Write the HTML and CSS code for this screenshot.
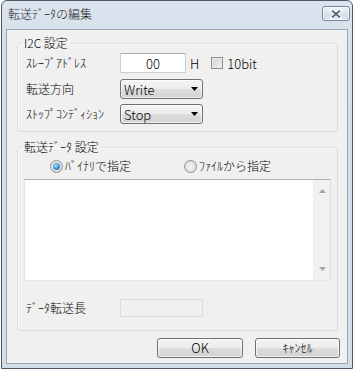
FILE: index.html
```html
<!DOCTYPE html>
<html lang="ja">
<head>
<meta charset="utf-8">
<title>転送ﾃﾞｰﾀの編集</title>
<link rel="stylesheet" href="styles.css">
</head>
<body>
<div class="window">
  <div class="titlebar">
    <span class="title">転送ﾃﾞｰﾀの編集</span>
    <span class="close">
      <svg width="27" height="14" viewBox="0 0 27 14">
        <path d="M9.5 3.5 L17.5 10.5 M17.5 3.5 L9.5 10.5" stroke="#f4f7fa" stroke-width="4" stroke-linecap="square" fill="none"/>
        <path d="M9.5 3.5 L17.5 10.5 M17.5 3.5 L9.5 10.5" stroke="#55606e" stroke-width="2" fill="none"/>
      </svg>
    </span>
  </div>
  <div class="client">
    <fieldset class="group g1">
      <legend>I2C 設定</legend>
      <div class="gbody g1body">
        <div class="row">
          <span class="lbl">ｽﾚｰﾌﾞｱﾄﾞﾚｽ</span>
          <span class="textbox addr">00</span>
          <span class="unit">H</span>
          <span class="check"></span>
          <span class="chklbl">10bit</span>
        </div>
        <div class="row r2">
          <span class="lbl">転送方向</span>
          <span class="combo">Write<svg class="arrow" width="7" height="4" viewBox="0 0 7 4"><path d="M0 0H7L3.5 4Z" fill="#000"/></svg></span>
        </div>
        <div class="row r3">
          <span class="lbl">ｽﾄｯﾌﾟｺﾝﾃﾞｨｼｮﾝ</span>
          <span class="combo">Stop<svg class="arrow" width="7" height="4" viewBox="0 0 7 4"><path d="M0 0H7L3.5 4Z" fill="#000"/></svg></span>
        </div>
      </div>
    </fieldset>
    <fieldset class="group g2">
      <legend>転送ﾃﾞｰﾀ 設定</legend>
      <div class="gbody g2body">
        <div class="radios">
          <span class="opt first"><span class="radio on"></span><span class="rlbl">ﾊﾞｲﾅﾘで指定</span></span>
          <span class="opt"><span class="radio"></span><span class="rlbl">ﾌｧｲﾙから指定</span></span>
        </div>
        <div class="memo">
          <div class="memo-text"></div>
          <div class="vscroll">
            <svg width="7" height="4" viewBox="0 0 7 4"><path d="M0 4H7L3.5 0Z" fill="#a3a3a3"/></svg>
            <svg width="7" height="4" viewBox="0 0 7 4"><path d="M0 0H7L3.5 4Z" fill="#a3a3a3"/></svg>
          </div>
        </div>
        <div class="row r4">
          <span class="lbl">ﾃﾞｰﾀ転送長</span>
          <span class="textbox disabled"></span>
        </div>
      </div>
    </fieldset>
    <div class="buttons">
      <span class="btn ok">OK</span>
      <span class="btn cancel">ｷｬﾝｾﾙ</span>
    </div>
  </div>
</div>
</body>
</html>
```
FILE: styles.css
```css
* { box-sizing: border-box; }
html, body { margin: 0; padding: 0; background: #ffffff; }
body {
  font-family: "Noto Sans CJK JP", "Liberation Sans", sans-serif;
  font-size: 12px;
  font-weight: 300;
  color: #000;
}
.window {
  margin-left: 1px;
  width: 352px;
  height: 369px;
  border: 1px solid #4f5966;
  border-radius: 6px 6px 0 0;
  background: linear-gradient(#dce5ef, #d6dfea 40px, #d4deea);
  padding: 0 4px 4px 4px;
  display: flex;
  flex-direction: column;
}
.titlebar {
  height: 28px;
  margin: 0 -4px;
  padding: 0 2px 3px 6px;
  display: flex;
  align-items: center;
  justify-content: space-between;
}
.title {
  font-size: 12px;
  line-height: 14px;
  color: #1e1e1e;
}
.close {
  width: 28px;
  height: 15px;
  border: 1px solid #7a8797;
  border-radius: 3px;
  background: linear-gradient(#eef2f7, #dfe6ee 50%, #d2dbe6 51%, #dbe3ec);
  display: flex;
  align-items: center;
  justify-content: center;
  box-shadow: inset 0 0 0 1px rgba(255,255,255,0.6);
}
.close svg { display: block; }
.client {
  flex: 1;
  border: 1px solid #98a6b6;
  background: #f0f0f0;
  display: flex;
  flex-direction: column;
}
.group {
  margin: 0;
  padding: 0;
  border: 1px solid #d5dfe5;
  border-radius: 3px;
  width: 321px;
  margin-left: 10px;
  min-inline-size: 0;
  box-shadow: inset 1px 1px 0 #fafafa;
}
.group legend {
  margin-left: 4px;
  padding: 0 2px;
  line-height: 14px;
  font-size: 12px;
}
.g1 { margin-top: 6px; }
.g2 { margin-top: 8px; }
.g1body { padding: 3px 0 7px 8px; }
.row {
  display: flex;
  align-items: center;
  height: 20px;
}
.r2 { margin-top: 6px; }
.r3 { margin-top: 5px; }
.lbl {
  width: 94px;
  flex: none;
  line-height: 14px;
}
.latin {
  font-size: 13px;
}
.textbox {
  height: 20px;
  border: 1px solid #c9ced6;
  border-top-color: #abadb3;
  background: #fff;
  font-size: 13px;
  display: flex;
  align-items: center;
  justify-content: center;
}
.addr { width: 66px; }
.unit {
  margin-left: 4px;
  font-size: 13px;
}
.check {
  margin-left: 12px;
  width: 12px;
  height: 12px;
  border: 1px solid #8e8f8f;
  background: linear-gradient(135deg, #d2d2d2, #f2f2f2);
  box-shadow: inset 0 0 0 1px #e8e8e8;
}
.chklbl {
  margin-left: 4px;
  font-size: 13px;
}
.combo {
  width: 83px;
  height: 20px;
  border: 1px solid #707070;
  border-radius: 3px;
  background: linear-gradient(#f4f4f4, #ececec 50%, #dedede 50%, #d2d2d2);
  box-shadow: inset 0 0 0 1px rgba(255,255,255,0.7);
  font-size: 13px;
  padding-left: 3px;
  padding-right: 4px;
  display: flex;
  align-items: center;
  justify-content: space-between;
}
.combo .arrow { display: block; }
.g2body { padding: 4px 6px 13px 6px; }
.radios {
  height: 16px;
  display: flex;
  align-items: center;
  padding-left: 26px;
}
.opt { display: flex; align-items: center; }
.opt.first { width: 134px; }
.radio {
  width: 13px;
  height: 13px;
  border-radius: 50%;
  border: 1px solid #8e8f8f;
  background: radial-gradient(circle at 50% 50%, #f4f4f4 0, #e2e2e2 60%, #d8d8d8 100%);
  display: flex;
  align-items: center;
  justify-content: center;
}
.radio.on::after {
  content: "";
  width: 7px;
  height: 7px;
  border-radius: 50%;
  background: radial-gradient(circle at 40% 35%, #a6e2fb 0, #3a8fd0 55%, #1f5a98 100%);
}
.rlbl { margin-left: 2px; line-height: 14px; }
.memo {
  margin-top: 5px;
  height: 102px;
  border: 1px solid #abadb3;
  border-color: #abadb3 #dbdfe6 #e3e9ef #e2e3ea;
  background: #fff;
  display: flex;
}
.memo-text { flex: 1; }
.vscroll {
  width: 17px;
  background: #f1f1f1;
  border-left: 1px solid #ececec;
  display: flex;
  flex-direction: column;
  align-items: center;
  justify-content: space-between;
  padding: 9px 0 9px 0;
}
.vscroll svg { display: block; }
.r4 { margin-top: 18px; height: 18px; padding-left: 2px; }
.textbox.disabled {
  width: 83px;
  height: 18px;
  background: #f0f0f0;
  border: 1px solid #dadada;
}
.buttons {
  margin-top: 7px;
  display: flex;
  justify-content: flex-end;
  padding-right: 7px;
  gap: 12px;
}
.btn {
  height: 20px;
  border: 1px solid #707070;
  border-radius: 3px;
  background: linear-gradient(#f4f4f4, #ececec 50%, #dedede 50%, #d2d2d2);
  box-shadow: inset 0 0 0 1px rgba(255,255,255,0.7);
  display: flex;
  align-items: center;
  justify-content: center;
  line-height: 14px;
}
.ok { width: 86px; font-size: 13px; }
.cancel { width: 85px; }
```
